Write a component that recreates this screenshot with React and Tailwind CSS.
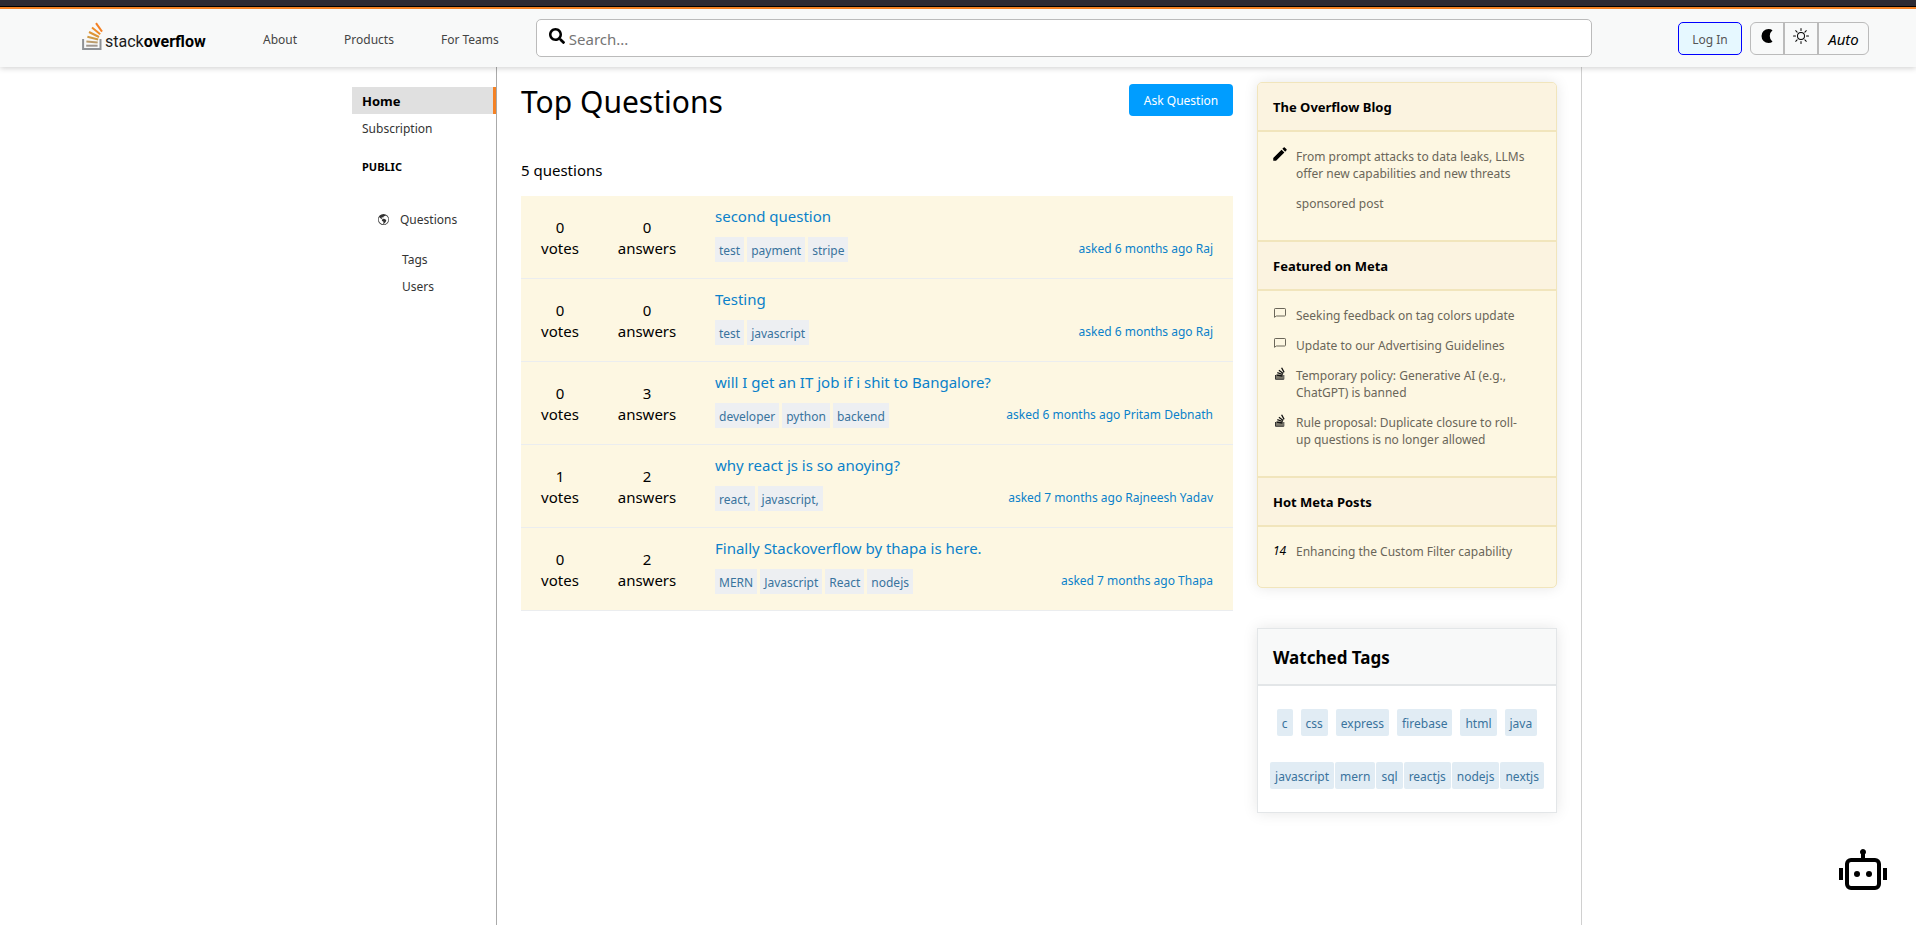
import { BsGlobeAmericas, BsSun } from "react-icons/bs";
import { FaSearch } from "react-icons/fa";
import { MdModeEdit } from "react-icons/md";

const questions = [
  { id: 1, votes: 0, answers: 0, title: "second question", tags: ["test", "payment", "stripe"], asked: "asked 6 months ago Raj" },
  { id: 2, votes: 0, answers: 0, title: "Testing", tags: ["test", "javascript"], asked: "asked 6 months ago Raj" },
  { id: 3, votes: 0, answers: 3, title: "will I get an IT job if i shit to Bangalore?", tags: ["developer", "python", "backend"], asked: "asked 6 months ago Pritam Debnath" },
  { id: 4, votes: 1, answers: 2, title: "why react js is so anoying?", tags: ["react,", "javascript,"], asked: "asked 7 months ago Rajneesh Yadav" },
  { id: 5, votes: 0, answers: 2, title: "Finally Stackoverflow by thapa is here.", tags: ["MERN", "Javascript", "React", "nodejs"], asked: "asked 7 months ago Thapa" },
];

function Logo() {
  return (
    <a href="#" aria-label="stackoverflow" className="flex w-[122px] shrink-0 items-end pb-1">
      <svg viewBox="0 0 21 28" className="h-7 w-[21px] shrink-0" fill="none">
        <path d="M1.1 17v10h17.400V17" stroke="#8f9296" strokeWidth="2" />
        <path d="M4.2 23.700h11.400" stroke="#a0978f" strokeWidth="2" />
        <path d="M4.400 19.400l11.300 1.200" stroke="#bb9c6c" strokeWidth="2" />
        <path d="M5.400 14.700l10.800 2.800" stroke="#cf9a45" strokeWidth="2" />
        <path d="M7 10l10 5" stroke="#dd9536" strokeWidth="2" />
        <path d="M10 5.500l8.200 6.800" stroke="#ee8c28" strokeWidth="2" />
        <path d="M14 1.200l6 8.400" stroke="#f48024" strokeWidth="2" />
      </svg>
      <span className="pl-0.5 font-[Roboto,sans-serif] text-[16px] leading-[17px] text-[#1b1b1b]">
        stack<b className="font-bold text-black">overflow</b>
      </span>
    </a>
  );
}

function RobotIcon() {
  return (
    <svg viewBox="0 0 24 24" className="size-12" fill="currentColor">
      <path fillRule="evenodd" d="M13.500 2a1.500 1.500 0 0 1-.5 1.120V5h5a3 3 0 0 1 3 3v10a3 3 0 0 1-3 3H6a3 3 0 0 1-3-3V8a3 3 0 0 1 3-3h5V3.120A1.500 1.500 0 1 1 13.500 2ZM6 7a1 1 0 0 0-1 1v10a1 1 0 0 0 1 1h12a1 1 0 0 0 1-1V8a1 1 0 0 0-1-1H6Z" />
      <path d="M0 10h2v6H0zM22 10h2v6h-2z" />
      <circle cx="9" cy="13" r="1.500" />
      <circle cx="15" cy="13" r="1.500" />
    </svg>
  );
}

function CommentIcon() {
  return (
    <svg viewBox="0 0 12 10" className="ml-px h-[10px] w-3" fill="none" stroke="#6a6659">
      <path d="M.5 9.300V1.200C.5.800.8.500 1.200.500h9.600c.4 0 .7.300.7.700v6.100c0 .4-.3.700-.7.700H2.300L.5 9.300Z" />
    </svg>
  );
}

function StackIcon() {
  return (
    <svg viewBox="0 0 12 13" className="ml-px h-[13px] w-3" fill="none">
      <path d="M2 7.500h7v4.500H2z" fill="#7c796c" />
      <path d="M1.500 8v4.300h8.300V8" stroke="#333" />
      <path d="M2.800 8.200l5.600.8M3.300 5.700l5.400 1.800M4.900 3.200l4.300 3.300M7.600.8l2.500 4.600" stroke="#111" strokeWidth="1.300" />
    </svg>
  );
}

function Header() {
  return (
    <header className="relative z-10 bg-[#f8f9f9] shadow-[0_1px_6px_rgba(0,0,0,0.2)]">
      <div className="h-[7px] border-b border-black bg-[#2d2a33]" />
      <div className="flex h-[60px] items-center border-t-2 border-[#f48225] pr-[47px] pl-[82px]">
        <Logo />
        <nav className="ml-[59px] flex shrink-0 gap-[47px] pt-1 text-[12px] text-[#444]">
          <a href="#">About</a>
          <a href="#">Products</a>
          <a href="#">For Teams</a>
        </nav>
        <label className="ml-[37px] flex h-[38px] flex-1 items-center gap-1 rounded-[5px] border border-[#bbb] bg-white pl-3">
          <FaSearch className="mb-1 size-4 shrink-0" />
          <input type="text" aria-label="Search" placeholder="Search..." className="w-full bg-transparent pt-0.5 text-[15px] outline-none placeholder:text-[#757575]" />
        </label>
        <button className="ml-[86px] h-[33px] w-16 rounded-[5px] border border-[#0000ff] bg-[#e6f8ff] pt-1 text-[12px] text-[#555]">Log In</button>
        <div className="ml-2 flex h-[33px] divide-x-2 divide-[#bbb] rounded-[6px] border border-[#bbb]">
          <button aria-label="Dark theme" className="flex w-[34px] items-center justify-center">
            <svg viewBox="0 0 12 14" className="mb-1 h-[14px] w-3" fill="black">
              <path d="M7.5 0A7 7 0 0 0 7.5 14C9 14 10.400 13.600 11.500 12.800A7.500 7.500 0 0 1 11.500 1.200C10.400 .4 9 0 7.500 0Z" />
            </svg>
          </button>
          <button aria-label="Light theme" className="flex w-[34px] items-center justify-center">
            <BsSun className="mb-1 size-4" />
          </button>
          <button className="w-[49px] pt-0.5 text-[15px] italic">Auto</button>
        </div>
      </div>
    </header>
  );
}

function Sidebar() {
  return (
    <aside className="w-[145px] shrink-0 border-r border-[#aaa] pt-5 text-[12px] leading-[27px] text-[#333]">
      <nav className="flex flex-col">
        <a href="#" className="border-r-[3px] border-[#f48225] bg-[#e0e0e0] pt-0.5 pl-2.5 text-[13px] leading-[25px] font-bold text-black">Home</a>
        <a href="#" className="pt-0.5 pl-2.5 leading-[25px]">Subscription</a>
        <h2 className="mt-3 pl-2.5 text-[11px] leading-[27px] font-bold text-black">PUBLIC</h2>
        <a href="#" className="mt-[26px] flex items-center gap-[11px] pl-[26px]">
          <BsGlobeAmericas className="size-[11px]" />
          Questions
        </a>
        <a href="#" className="mt-[13px] pl-[50px]">Tags</a>
        <a href="#" className="pl-[50px]">Users</a>
      </nav>
    </aside>
  );
}

function Question({ q }) {
  return (
    <li className="flex h-[83px] items-center border-b border-[#ebedef] bg-[#fdf7e2] pr-5">
      <div className="flex w-[78px] flex-col items-center pt-0.5 text-[15px] leading-[21px]">
        <span>{q.votes}</span>
        <span>votes</span>
      </div>
      <div className="flex w-24 flex-col items-center pt-0.5 text-[15px] leading-[21px]">
        <span>{q.answers}</span>
        <span>answers</span>
      </div>
      <div className="ml-5 flex flex-1 flex-col gap-[11px] self-start pt-[10px]">
        <a href="#" className="text-[15px] leading-5 text-[#0a81ca]">{q.title}</a>
        <div className="flex items-start justify-between">
          <div className="flex gap-[3px] text-[12px] leading-[23px] text-[#39739d]">
            {q.tags.map((t) => (
              <a href="#" key={t} className="bg-[#edeff2] px-1 pt-0.5">{t}</a>
            ))}
          </div>
          <span className="text-[12px] leading-6 text-[#0a81ca]">{q.asked}</span>
        </div>
      </div>
    </li>
  );
}

function SectionTitle({ children }) {
  return <h3 className="border-b-2 border-[#f1e5bc] bg-[#fbf3e0] px-[15px] pt-0.5 text-[13px] leading-[45px] font-bold text-black">{children}</h3>;
}

function Item({ icon, children }) {
  return (
    <li className="flex items-start">
      <span className="flex h-3 w-[23px] shrink-0 items-center">{icon}</span>
      <a href="#" className="pr-3 leading-[17px]">{children}</a>
    </li>
  );
}

function BlogCard() {
  return (
    <section className="overflow-hidden rounded-[5px] border border-[#f1e5bc] bg-[#fdf7e2] text-[12px] text-[#6a6659] shadow-[0_0_14px_rgba(0,0,0,0.1)]">
      <SectionTitle>The Overflow Blog</SectionTitle>
      <ul className="flex h-[108px] flex-col gap-[13px] px-[15px] pt-4">
        <Item icon={<MdModeEdit className="-ml-0.5 size-[18px] text-black" />}>From prompt attacks to data leaks, LLMs offer new capabilities and new threats</Item>
        <Item>sponsored post</Item>
      </ul>
      <div className="border-t-2 border-[#f1e5bc]"><SectionTitle>Featured on Meta</SectionTitle></div>
      <ul className="flex h-[185px] flex-col gap-[13px] px-[15px] pt-4">
        <Item icon={<CommentIcon />}>Seeking feedback on tag colors update</Item>
        <Item icon={<CommentIcon />}>Update to our Advertising Guidelines</Item>
        <Item icon={<StackIcon />}>Temporary policy: Generative AI (e.g., ChatGPT) is banned</Item>
        <Item icon={<StackIcon />}>Rule proposal: Duplicate closure to roll-up questions is no longer allowed</Item>
      </ul>
      <div className="border-t-2 border-[#f1e5bc]"><SectionTitle>Hot Meta Posts</SectionTitle></div>
      <ul className="h-[60px] px-[15px] pt-4">
        <Item icon={<span className="pt-1 text-[12px] text-black italic">14</span>}>Enhancing the Custom Filter capability</Item>
      </ul>
    </section>
  );
}

function WatchedTag({ children }) {
  return <a href="#" className="rounded-[2px] bg-[#e1ecf4] px-[5px] pt-0.5">{children}</a>;
}

function WatchedTags() {
  return (
    <section className="mt-10 border border-[#e3e6e8] text-[12px] leading-[25px] text-[#39739d] shadow-[0_0_14px_rgba(0,0,0,0.1)]">
      <h3 className="border-b-2 border-[#e3e6e8] bg-[#f8f9f9] px-[15px] pt-0.5 text-[17px] leading-[53px] font-bold text-black">Watched Tags</h3>
      <div className="flex flex-col gap-[26px] py-[23px]">
        <div className="flex justify-center gap-2">
          {["c", "css", "express", "firebase", "html", "java"].map((t) => <WatchedTag key={t}>{t}</WatchedTag>)}
        </div>
        <div className="flex justify-center gap-px">
          {["javascript", "mern", "sql", "reactjs", "nodejs", "nextjs"].map((t) => <WatchedTag key={t}>{t}</WatchedTag>)}
        </div>
      </div>
    </section>
  );
}

export default function App() {
  return (
    <div className="flex min-h-screen flex-col bg-white font-['Noto_Sans',sans-serif] text-black">
      <Header />
      <div className="flex flex-1 justify-center pl-[18px]">
        <div className="flex w-full max-w-[1230px]">
          <Sidebar />
          <main className="flex min-w-0 flex-1 gap-6 border-r border-[#d0d0d0] px-6 pt-[15px]">
            <div className="min-w-0 flex-1">
              <div className="flex items-start justify-between pt-0.5">
                <h1 className="text-[30px] leading-9">Top Questions</h1>
                <button className="h-8 w-[104px] rounded-[4px] bg-[#009dff] pt-0.5 text-[12px] text-white">Ask Question</button>
              </div>
              <p className="mt-10 text-[15px] leading-5">5 questions</p>
              <ul className="mt-4">
                {questions.map((q) => <Question key={q.id} q={q} />)}
              </ul>
            </div>
            <div className="w-[300px] shrink-0">
              <BlogCard />
              <WatchedTags />
            </div>
          </main>
        </div>
      </div>
      <button aria-label="Open chat assistant" className="fixed right-[29px] bottom-[29px]">
        <RobotIcon />
      </button>
    </div>
  );
}
